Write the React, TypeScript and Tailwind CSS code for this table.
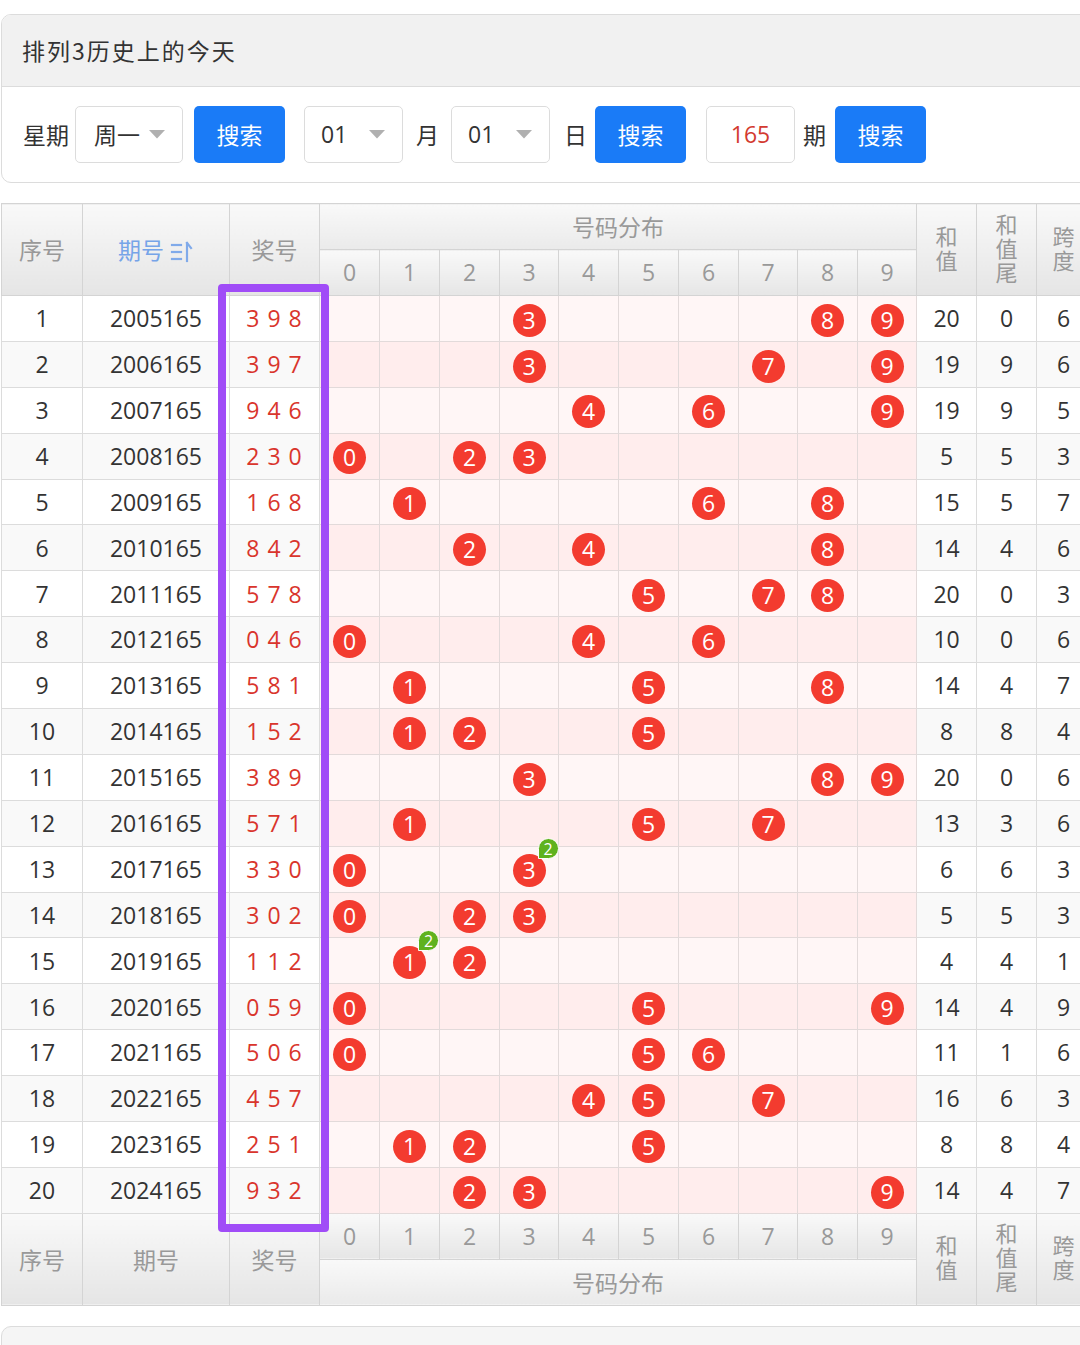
import React from "react";

type Row = { n: number; issue: string; award: number[]; sum: number; tail: number; span: number };

const raw: [string, string, number, number, number][] = [
  ["2005165", "398", 20, 0, 6],
  ["2006165", "397", 19, 9, 6],
  ["2007165", "946", 19, 9, 5],
  ["2008165", "230", 5, 5, 3],
  ["2009165", "168", 15, 5, 7],
  ["2010165", "842", 14, 4, 6],
  ["2011165", "578", 20, 0, 3],
  ["2012165", "046", 10, 0, 6],
  ["2013165", "581", 14, 4, 7],
  ["2014165", "152", 8, 8, 4],
  ["2015165", "389", 20, 0, 6],
  ["2016165", "571", 13, 3, 6],
  ["2017165", "330", 6, 6, 3],
  ["2018165", "302", 5, 5, 3],
  ["2019165", "112", 4, 4, 1],
  ["2020165", "059", 14, 4, 9],
  ["2021165", "506", 11, 1, 6],
  ["2022165", "457", 16, 6, 3],
  ["2023165", "251", 8, 8, 4],
  ["2024165", "932", 14, 4, 7],
];

const rows: Row[] = raw.map((r, i) => ({
  n: i + 1,
  issue: r[0],
  award: r[1].split("").map(Number),
  sum: r[2],
  tail: r[3],
  span: r[4],
}));

const colW = [81, 147, 90, 60, 60, 60, 59, 60, 60, 60, 59, 60, 59, 60, 60, 54];

const FONT = "font-['Open_Sans','Noto_Sans_CJK_SC',sans-serif]";
const HEAD = "bg-linear-to-b from-[#f9f9f9] to-[#e5e5e5] text-[#999] border border-[#d4d4d4] font-normal p-0";

function Arrow() {
  return (
    <svg width="16" height="9" viewBox="0 0 16 9" className="shrink-0">
      <path d="M0 0 L16 0 L8 8.5 Z" fill="#b0b0b0" />
    </svg>
  );
}

function SortIcon() {
  return (
    <svg width="24" height="24" viewBox="0 0 24 24" className="inline-block ml-[6px] -mt-[2px] align-middle">
      <g stroke="#80aaea" strokeWidth="2.2" fill="none" strokeLinecap="square">
        <line x1="2" y1="5" x2="11" y2="5" />
        <line x1="2" y1="12" x2="11" y2="12" />
        <line x1="2" y1="19" x2="11" y2="19" />
        <line x1="17" y1="3" x2="17" y2="21" />
        <line x1="17" y1="3" x2="21" y2="8" />
      </g>
    </svg>
  );
}

function Ball({ d, badge }: { d: number; badge?: number }) {
  return (
    <span className="relative inline-flex w-[33px] h-[33px] rounded-full bg-[#f33b2f] text-white text-[23px] leading-none items-center justify-center align-middle">
      {d}
      {badge ? (
        <span className="absolute left-[25px] -top-[16px] w-[21px] h-[21px] rounded-[10.5px_10.5px_10.5px_0] bg-[#5fb21e] border border-white text-white text-[16px] leading-none flex items-center justify-center">
          {badge}
        </span>
      ) : null}
    </span>
  );
}

function VText({ text }: { text: string }) {
  return (
    <div className="flex justify-center">
      <span className="[writing-mode:vertical-rl] text-[22px] leading-[24px] tracking-[2px] font-['Noto_Sans_CJK_SC',sans-serif]">
        {text}
      </span>
    </div>
  );
}

const CJK = "font-['Noto_Sans_CJK_SC',sans-serif]";

export default function App() {
  const digits = [0, 1, 2, 3, 4, 5, 6, 7, 8, 9];
  return (
    <div className={`w-[1080px] h-[1345px] overflow-hidden bg-white ${FONT} text-[#333]`}>
      <div className="w-[1100px] pl-[1px] pt-[14px]">
        {/* Search card */}
        <div className="border border-[#dcdcdc] rounded-[10px] overflow-hidden">
          <div className={`h-[72px] bg-[#f1f1f1] border-b border-[#dcdcdc] flex items-center pl-[20px] text-[23px] tracking-[2px] text-[#333] ${CJK}`}>
            排列3历史上的今天
          </div>
          <div className="h-[95px] flex items-center pl-[21px] text-[23px]">
            <span className={CJK}>星期</span>
            <div className="ml-[6px] w-[108px] h-[57px] border border-[#dcdcdc] rounded-[5px] flex items-center pl-[18px] gap-[9px]">
              <span className={CJK}>周一</span>
              <Arrow />
            </div>
            <button className={`ml-[11px] w-[91px] h-[57px] rounded-[5px] bg-[#1a7bf7] text-white text-[23px] ${CJK}`}>
              搜索
            </button>
            <div className="ml-[19px] w-[99px] h-[57px] border border-[#dcdcdc] rounded-[5px] flex items-center pl-[16px] gap-[22px]">
              <span>01</span>
              <Arrow />
            </div>
            <span className={`ml-[13px] ${CJK}`}>月</span>
            <div className="ml-[12px] w-[99px] h-[57px] border border-[#dcdcdc] rounded-[5px] flex items-center pl-[16px] gap-[22px]">
              <span>01</span>
              <Arrow />
            </div>
            <span className={`ml-[14px] ${CJK}`}>日</span>
            <button className={`ml-[8px] w-[91px] h-[57px] rounded-[5px] bg-[#1a7bf7] text-white text-[23px] ${CJK}`}>
              搜索
            </button>
            <div className="ml-[20px] w-[89px] h-[57px] border border-[#dcdcdc] rounded-[5px] flex items-center justify-center text-[#d33a30]">
              165
            </div>
            <span className={`ml-[8px] ${CJK}`}>期</span>
            <button className={`ml-[9px] w-[91px] h-[57px] rounded-[5px] bg-[#1a7bf7] text-white text-[23px] ${CJK}`}>
              搜索
            </button>
          </div>
        </div>

        {/* Table */}
        <div className="relative mt-[20px]">
          <table className="table-fixed border-collapse w-[1089px] text-center">
            <colgroup>
              {colW.map((w, i) => (
                <col key={i} style={{ width: w }} />
              ))}
            </colgroup>
            <thead>
              <tr className="h-[46px]">
                <th rowSpan={2} className={`${HEAD} text-[23px] ${CJK}`}>序号</th>
                <th rowSpan={2} className={`${HEAD} text-[23px] !text-[#76a4e8] ${CJK}`}>
                  期号
                  <SortIcon />
                </th>
                <th rowSpan={2} className={`${HEAD} text-[23px] ${CJK}`}>奖号</th>
                <th colSpan={10} className={`${HEAD} text-[23px] ${CJK} from-[#f7f7f7] to-[#eaeaea]`}>号码分布</th>
                <th rowSpan={2} className={HEAD}><VText text="和值" /></th>
                <th rowSpan={2} className={HEAD}><VText text="和值尾" /></th>
                <th rowSpan={2} className={HEAD}><VText text="跨度" /></th>
              </tr>
              <tr className="h-[46px]">
                {digits.map((d) => (
                  <th key={d} className={`${HEAD} text-[23px] from-[#f7f7f7] to-[#e6e6e6]`}>{d}</th>
                ))}
              </tr>
            </thead>
            <tbody>
              {rows.map((r) => {
                const odd = r.n % 2 === 1;
                const side = odd ? "bg-white" : "bg-[#f9f9f9]";
                const pink = odd ? "bg-[#fff6f6]" : "bg-[#ffeded]";
                const counts: Record<number, number> = {};
                r.award.forEach((d) => (counts[d] = (counts[d] || 0) + 1));
                return (
                  <tr key={r.n} className="h-[45.9px] text-[23px]">
                    <td className={`${side} border border-[#dcdcdc] p-0`}>{r.n}</td>
                    <td className={`${side} border border-[#dcdcdc] p-0`}>{r.issue}</td>
                    <td className={`${side} border border-[#dcdcdc] p-0 text-[#d9352c] whitespace-pre tracking-[1px]`}>{r.award.join(" ")}</td>
                    {digits.map((d) => (
                      <td key={d} className={`${pink} border border-[#e2dada] p-0`}>
                        {counts[d] ? <Ball d={d} badge={counts[d] > 1 ? counts[d] : undefined} /> : null}
                      </td>
                    ))}
                    <td className={`${side} border border-[#dcdcdc] p-0`}>{r.sum}</td>
                    <td className={`${side} border border-[#dcdcdc] p-0`}>{r.tail}</td>
                    <td className={`${side} border border-[#dcdcdc] p-0`}>{r.span}</td>
                  </tr>
                );
              })}
            </tbody>
            <tfoot>
              <tr className="h-[46px]">
                <th rowSpan={2} className={`${HEAD} text-[23px] ${CJK}`}>序号</th>
                <th rowSpan={2} className={`${HEAD} text-[23px] ${CJK}`}>期号</th>
                <th rowSpan={2} className={`${HEAD} text-[23px] ${CJK}`}>奖号</th>
                {digits.map((d) => (
                  <th key={d} className={`${HEAD} text-[23px] from-[#f7f7f7] to-[#e6e6e6]`}>{d}</th>
                ))}
                <th rowSpan={2} className={HEAD}><VText text="和值" /></th>
                <th rowSpan={2} className={HEAD}><VText text="和值尾" /></th>
                <th rowSpan={2} className={HEAD}><VText text="跨度" /></th>
              </tr>
              <tr className="h-[46px]">
                <th colSpan={10} className={`${HEAD} text-[23px] ${CJK} from-[#f7f7f7] to-[#eaeaea]`}>号码分布</th>
              </tr>
            </tfoot>
          </table>
          {/* highlight box */}
          <div className="absolute left-[217px] top-[81px] w-[111px] h-[948px] border-[8px] border-[#a04cf7] rounded-[4px] pointer-events-none" />
        </div>

        {/* Next card */}
        <div className="mt-[20px] h-[60px] border border-[#dcdcdc] rounded-[10px] bg-[#f5f5f5]" />
      </div>
    </div>
  );
}
